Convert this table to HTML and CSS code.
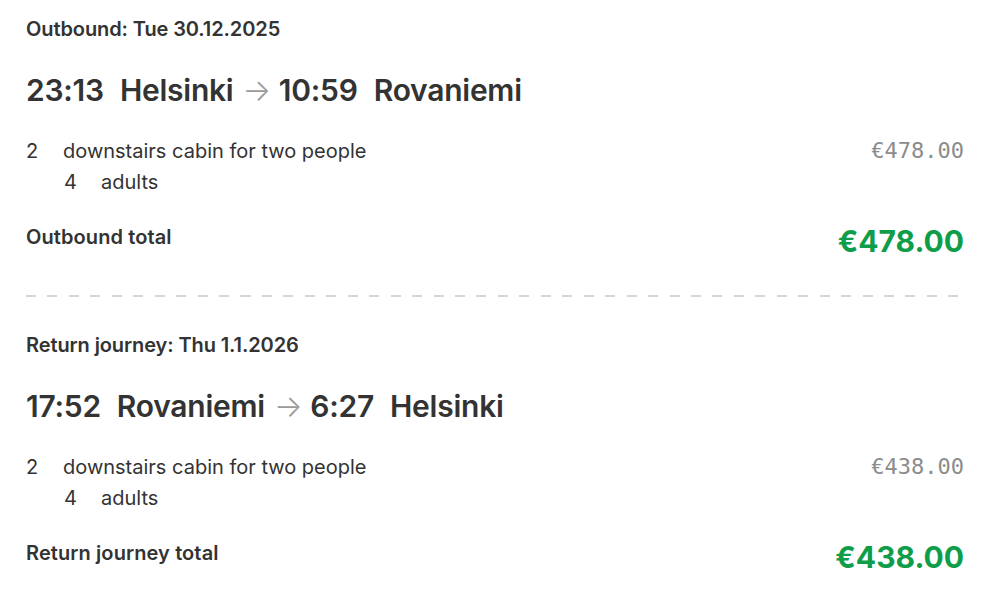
FILE: index.html
```html
<!DOCTYPE html>
<html lang="en">
<head>
<meta charset="utf-8">
<title>Journey summary</title>
<link rel="stylesheet" href="styles.css">
</head>
<body>
<main class="summary">
  <section class="leg">
    <h2 class="leg-date">Outbound: Tue 30.12.2025</h2>
    <h1 class="leg-route">
      <span class="stop"><span class="time">23:13</span><span class="city">Helsinki</span></span>
      <span class="arrow">→</span>
      <span class="stop"><span class="time">10:59</span><span class="city">Rovaniemi</span></span>
    </h1>
    <div class="item">
      <div class="item-main">
        <span class="qty">2</span><span class="desc">downstairs cabin for two people</span>
      </div>
      <span class="price">€478.00</span>
    </div>
    <div class="sub-item">
      <span class="qty">4</span><span class="desc">adults</span>
    </div>
    <div class="total">
      <span class="total-label">Outbound total</span>
      <span class="total-price">€478.00</span>
    </div>
  </section>
  <hr class="divider">
  <section class="leg">
    <h2 class="leg-date">Return journey: Thu 1.1.2026</h2>
    <h1 class="leg-route">
      <span class="stop"><span class="time">17:52</span><span class="city">Rovaniemi</span></span>
      <span class="arrow">→</span>
      <span class="stop"><span class="time">6:27</span><span class="city">Helsinki</span></span>
    </h1>
    <div class="item">
      <div class="item-main">
        <span class="qty">2</span><span class="desc">downstairs cabin for two people</span>
      </div>
      <span class="price">€438.00</span>
    </div>
    <div class="sub-item">
      <span class="qty">4</span><span class="desc">adults</span>
    </div>
    <div class="total">
      <span class="total-label">Return journey total</span>
      <span class="total-price">€438.00</span>
    </div>
  </section>
</main>
</body>
</html>
```
FILE: styles.css
```css
html, body {
  margin: 0;
  padding: 0;
  background: #ffffff;
}
body {
  font-family: Inter, "Liberation Sans", sans-serif;
  color: #333333;
}
.summary {
  padding: 17px 24px 0 26px;
}
.leg {
  display: flex;
  flex-direction: column;
}
.leg-date {
  margin: 0;
  font-size: 20px;
  font-weight: 600;
  line-height: 24px;
  letter-spacing: -0.1px;
}
.leg-route {
  margin: 29px 0 0;
  display: flex;
  align-items: center;
  font-size: 30px;
  font-weight: 600;
  line-height: 40px;
  letter-spacing: -0.25px;
}
.stop {
  display: flex;
  gap: 16px;
}
.arrow {
  color: #9a9a9a;
  font-weight: 300;
  margin: 0 8px 0 9px;
}
.item {
  margin-top: 28px;
  display: flex;
  justify-content: space-between;
  align-items: center;
  font-size: 20px;
  line-height: 26px;
}
.item-main, .sub-item {
  display: flex;
}
.qty {
  width: 37px;
  flex: none;
}
.sub-item {
  margin-top: 5px;
  padding-left: 38px;
  font-size: 20px;
  line-height: 26px;
}
.price {
  font-family: "DejaVu Sans Mono", "Liberation Mono", monospace;
  font-size: 22px;
  color: #8c8c8c;
}
.total {
  margin-top: 30px;
  display: flex;
  justify-content: space-between;
  align-items: flex-start;
}
.total-label {
  font-size: 20px;
  font-weight: 600;
  line-height: 24px;
  letter-spacing: 0.1px;
}
.total-price {
  font-size: 30px;
  font-weight: 700;
  line-height: 32px;
  color: #109d4a;
}
.divider {
  margin: 38px 0 36px 0;
  border: 0;
  height: 2px;
  background: repeating-linear-gradient(to right, #d6d6d6 0 10px, transparent 10px 21.45px);
}
```
